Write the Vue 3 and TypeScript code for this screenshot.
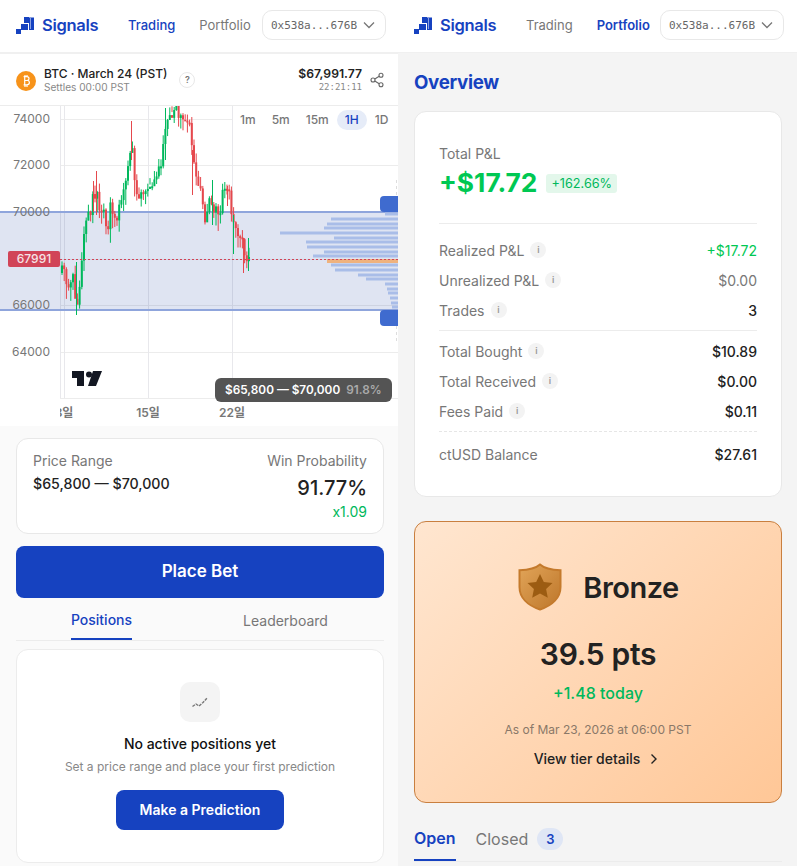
<script setup lang="ts">
// price path in chart pixels, candles get interpolated along it
const path: [number, number][] = [
  [61, 273], [67, 283], [72, 280], [76, 303], [80, 267], [83, 238], [90, 208], [95, 190],
  [100, 212], [107, 222], [110, 202], [115, 225], [120, 205], [125, 182], [131, 150], [135, 185],
  [140, 198], [147, 195], [152, 175], [158, 170], [162, 148], [165, 125], [172, 112], [180, 115],
  [188, 118], [192, 162], [195, 185], [200, 188], [203, 218], [210, 202], [217, 215], [222, 195],
  [228, 198], [233, 232], [240, 242], [245, 258], [249, 255],
]

function priceAt(x: number): number {
  for (let i = 1; i < path.length; i++) {
    const [x1, y1] = path[i]
    const [x0, y0] = path[i - 1]
    if (x <= x1) return y0 + ((y1 - y0) * (x - x0)) / (x1 - x0)
  }
  return path[path.length - 1][1]
}

function rand(seed: number): number {
  const n = Math.sin(seed * 12.9898) * 43758.5453
  return n - Math.floor(n)
}

const candles: { x: number; top: number; h: number; wickTop: number; wickH: number; up: boolean }[] = []
let prev = priceAt(61)
for (let x = 61; x < 250; x += 2.2) {
  const close = priceAt(x) + (rand(x) - 0.5) * 18
  const top = Math.min(prev, close)
  const bottom = Math.max(prev, close)
  candles.push({
    x,
    top,
    h: Math.max(bottom - top, 2),
    wickTop: top - 1 - rand(x + 7) * 8,
    wickH: bottom - top + 3 + rand(x + 13) * 16,
    up: close < prev,
  })
  prev = close
}

// the long wicks that stand out in the chart
const spikes = [
  { x: 76, top: 262, bottom: 315, up: true },
  { x: 93, top: 181, bottom: 212, up: false },
  { x: 96, top: 171, bottom: 215, up: false },
  { x: 131, top: 121, bottom: 160, up: false },
  { x: 165, top: 108, bottom: 160, up: true },
  { x: 192, top: 150, bottom: 195, up: false },
  { x: 212, top: 180, bottom: 225, up: true },
  { x: 227, top: 186, bottom: 206, up: false },
  { x: 233, top: 215, bottom: 254, up: true },
  { x: 243, top: 238, bottom: 273, up: false },
  { x: 248, top: 238, bottom: 271, up: true },
]

const gridY = [119, 165, 259, 305, 352, 398]
const gridX = [60, 64, 148, 232]
const axis = [
  { label: '74000', y: 123 },
  { label: '72000', y: 169 },
  { label: '70000', y: 216 },
  { label: '66000', y: 309 },
  { label: '64000', y: 356 },
]
const days = [
  { label: '8일', x: 64 },
  { label: '15일', x: 148 },
  { label: '22일', x: 232 },
]
const profile = [
  [214, 385], [219, 331], [224, 327], [228, 324], [233, 280], [238, 334], [242, 306], [247, 307],
  [252, 324], [256, 313], [265, 331], [270, 335], [275, 358], [279, 366], [284, 385], [289, 387],
  [293, 388], [298, 390], [303, 391], [307, 392],
]

const intervals = ['1m', '5m', '15m', '1H', '1D']

const pnlRows = [
  { label: 'Realized P&L', value: '+$17.72', tone: 'green' },
  { label: 'Unrealized P&L', value: '$0.00', tone: 'muted' },
  { label: 'Trades', value: '3', tone: '' },
]
const flowRows = [
  { label: 'Total Bought', value: '$10.89' },
  { label: 'Total Received', value: '$0.00' },
  { label: 'Fees Paid', value: '$0.11' },
]
</script>

<template>
  <div class="screens">
    <section class="panel panel--left">
      <header class="topbar">
        <div class="brand">
          <svg class="logo" viewBox="0 0 18 17" width="18" height="17">
            <path d="M8 0h10v13h-5V6H8z" fill="#1642c0" />
            <rect x="5" y="7" width="7" height="6" fill="#1642c0" />
            <rect x="0" y="12" width="5" height="5" fill="#1642c0" />
            <rect x="13" y="0" width="5" height="1" fill="#8aa0e0" />
            <rect x="14" y="1" width="1" height="11" fill="#8aa0e0" />
          </svg>
          <span class="brand-name">Signals</span>
        </div>
        <nav class="nav">
          <span class="nav-item nav-item--on">Trading</span>
          <span class="nav-item">Portfolio</span>
        </nav>
        <div class="wallet">
          <span>0x538a...676B</span>
          <svg viewBox="0 0 12 12" width="12" height="12"><path d="M1 3.500 6 8.500l5-5" fill="none" stroke="#777" stroke-width="1.3" /></svg>
        </div>
      </header>

      <div class="market">
        <svg class="coin" viewBox="0 0 20 20" width="20" height="20">
          <circle cx="10" cy="10" r="10" fill="#f7931a" />
          <path d="M7.600 5.600h3c1.500 0 2.400.8 2.400 2 0 .9-.5 1.500-1.200 1.800.9.2 1.600.9 1.600 2 0 1.500-1.100 2.400-2.800 2.400h-3M8.700 5.600v8.200M9 4v1.600M11 4v1.600M9 13.800V16M11 13.800V16M8.700 9.500h2.400" fill="none" stroke="#fff" stroke-width="1.200" />
        </svg>
        <div class="market-info">
          <div class="market-title">BTC · March 24 (PST)</div>
          <div class="market-sub">Settles 00:00 PST</div>
        </div>
        <span class="help">?</span>
        <div class="market-price">
          <div class="price">$67,991.77</div>
          <div class="clock">22:21:11</div>
        </div>
        <svg class="share" viewBox="0 0 14 16" width="14" height="16">
          <g fill="none" stroke="#666" stroke-width="1.100">
            <circle cx="11" cy="3.200" r="2" />
            <circle cx="3" cy="8" r="2" />
            <circle cx="11" cy="12.800" r="2" />
            <path d="M4.800 7 9.200 4.200M4.800 9l4.400 2.800" />
          </g>
        </svg>
      </div>

      <div class="chart">
        <svg class="chart-canvas" viewBox="0 106 398 320" width="398" height="320">
          <rect v-for="y in gridY" :key="'h' + y" x="60" :y="y" width="338" height="1" fill="#ececec" />
          <rect v-for="x in gridX" :key="'v' + x" :x="x" y="106" width="1" height="292" fill="#e8e8ec" />
          <rect x="0" y="212" width="398" height="98" fill="#1c3ea5" fill-opacity="0.14" />
          <rect x="0" y="211" width="398" height="2" fill="#8fa5dc" />
          <rect x="0" y="309" width="398" height="2" fill="#8fa5dc" />
          <line x1="396.500" y1="180" x2="396.500" y2="196" stroke="#ddd" stroke-dasharray="3 3" />
          <line x1="396.500" y1="326" x2="396.500" y2="342" stroke="#ddd" stroke-dasharray="3 3" />

          <rect v-for="p in profile" :key="p[0]" :x="p[1]" :y="p[0] - 1.500" :width="398 - p[1]" height="3" fill="#a9bde8" />
          <rect x="327" y="259" width="71" height="4" fill="#efb27e" />

          <g v-for="c in candles" :key="c.x" :fill="c.up ? '#00b85c' : '#e5484d'">
            <rect :x="c.x + 0.500" :y="c.wickTop" width="1" :height="c.wickH" />
            <rect :x="c.x" :y="c.top" width="2" :height="c.h" />
          </g>
          <rect v-for="s in spikes" :key="s.x" :x="s.x" :y="s.top" width="1" :height="s.bottom - s.top" :fill="s.up ? '#00b85c' : '#e5484d'" />

          <line x1="60" y1="259.500" x2="398" y2="259.500" stroke="#d14458" stroke-dasharray="2 2" />
          <text v-for="a in axis" :key="a.label" class="axis-text" x="50" :y="a.y" text-anchor="end">{{ a.label }}</text>
          <text v-for="d in days" :key="d.label" class="day-text" :x="d.x" y="417" text-anchor="middle">{{ d.label }}</text>
          <rect x="0" y="400" width="60" height="26" fill="#fff" />

          <path d="M72 371h12v15h-7v-8h-5z" fill="#131722" />
          <circle cx="89" cy="374.500" r="3" fill="#131722" />
          <path d="M93 371h9l-6 15h-8z" fill="#131722" />
        </svg>

        <div class="intervals">
          <span v-for="i in intervals" :key="i" class="interval" :class="{ 'interval--on': i === '1H' }">{{ i }}</span>
        </div>
        <span class="last-price">67991</span>
        <span class="handle handle--top" />
        <span class="handle handle--bottom" />
        <div class="range-tip">
          <span>$65,800 — $70,000</span>
          <span class="range-tip-pct">91.8%</span>
        </div>
      </div>

      <div class="trade">
        <div class="bet-card">
          <div>
            <div class="bet-label">Price Range</div>
            <div class="bet-range">$65,800 — $70,000</div>
          </div>
          <div class="bet-right">
            <div class="bet-label">Win Probability</div>
            <div class="bet-prob">91.77%</div>
            <div class="bet-mult">x1.09</div>
          </div>
        </div>
        <button class="place-bet">Place Bet</button>
        <div class="tabs">
          <div class="tab"><span class="tab-label tab-label--on">Positions</span></div>
          <div class="tab"><span class="tab-label">Leaderboard</span></div>
        </div>
        <div class="empty-card">
          <div class="empty-icon">
            <svg viewBox="0 0 16 16" width="16" height="16">
              <path d="M.5 12.500 4 10l3 2 4-3.500 4.500-5" fill="none" stroke="#777" stroke-width="1.400" stroke-dasharray="3 1" />
            </svg>
          </div>
          <div class="empty-title">No active positions yet</div>
          <div class="empty-sub">Set a price range and place your first prediction</div>
          <button class="predict">Make a Prediction</button>
        </div>
      </div>
    </section>

    <section class="panel panel--right">
      <header class="topbar topbar--right">
        <div class="brand">
          <svg class="logo" viewBox="0 0 18 17" width="18" height="17">
            <path d="M8 0h10v13h-5V6H8z" fill="#1642c0" />
            <rect x="5" y="7" width="7" height="6" fill="#1642c0" />
            <rect x="0" y="12" width="5" height="5" fill="#1642c0" />
            <rect x="13" y="0" width="5" height="1" fill="#8aa0e0" />
            <rect x="14" y="1" width="1" height="11" fill="#8aa0e0" />
          </svg>
          <span class="brand-name">Signals</span>
        </div>
        <nav class="nav">
          <span class="nav-item">Trading</span>
          <span class="nav-item nav-item--bold">Portfolio</span>
        </nav>
        <div class="wallet">
          <span>0x538a...676B</span>
          <svg viewBox="0 0 12 12" width="12" height="12"><path d="M1 3.500 6 8.500l5-5" fill="none" stroke="#777" stroke-width="1.300" /></svg>
        </div>
      </header>

      <div class="portfolio">
        <h1 class="overview">Overview</h1>
        <div class="pnl-card">
          <div class="pnl-label">Total P&amp;L</div>
          <div class="pnl-total">
            <span class="pnl-amount">+$17.72</span>
            <span class="pnl-badge">+162.66%</span>
          </div>
          <div class="rows rows--first">
            <div v-for="r in pnlRows" :key="r.label" class="row">
              <span class="row-label">{{ r.label }}<i class="info">i</i></span>
              <span class="row-value" :class="r.tone">{{ r.value }}</span>
            </div>
          </div>
          <div class="rows rows--second">
            <div v-for="r in flowRows" :key="r.label" class="row">
              <span class="row-label">{{ r.label }}<i class="info">i</i></span>
              <span class="row-value">{{ r.value }}</span>
            </div>
          </div>
          <div class="row row--balance">
            <span class="row-label">ctUSD Balance</span>
            <span class="row-value">$27.61</span>
          </div>
        </div>

        <div class="tier-card">
          <div class="tier-head">
            <svg viewBox="0 0 44 48" width="44" height="48">
              <defs>
                <linearGradient id="shieldFill" x1="0" y1="0" x2="1" y2="1">
                  <stop offset="0" stop-color="#e2a559" />
                  <stop offset="1" stop-color="#bd762a" />
                </linearGradient>
              </defs>
              <path d="M22 1.500c4 3.600 11 5.400 20.500 5.800V24c0 10.500-8 18.500-20.500 22.500C9.500 42.500 1.500 34.500 1.500 24V7.300C11 6.900 18 5.100 22 1.500z" fill="url(#shieldFill)" stroke="#c47a2c" stroke-width="2" />
              <path d="M22 11l3.800 8.100 8.700 1-6.400 6 1.700 8.700L22 30.500l-7.800 4.300 1.700-8.700-6.400-6 8.700-1z" fill="#9c5c12" />
            </svg>
            <span class="tier-name">Bronze</span>
          </div>
          <div class="tier-pts">39.5 pts</div>
          <div class="tier-today">+1.48 today</div>
          <div class="tier-asof">As of Mar 23, 2026 at 06:00 PST</div>
          <div class="tier-link">
            View tier details
            <svg viewBox="0 0 10 12" width="10" height="12"><path d="M2.500 1.500 7 6l-4.500 4.500" fill="none" stroke="#222" stroke-width="1.400" /></svg>
          </div>
        </div>

        <div class="trade-tabs">
          <span class="trade-tab trade-tab--on">Open</span>
          <span class="trade-tab">Closed<b class="count">3</b></span>
        </div>
      </div>
    </section>
  </div>
</template>

<style>
html, body { margin: 0; height: 866px; overflow: hidden; background: #f4f4f4; }
</style>

<style scoped>
* { box-sizing: border-box; }

.screens {
  display: grid;
  grid-template-columns: 398px 399px;
  height: 866px;
  overflow: hidden;
  font-family: Inter, "Noto Sans CJK KR", sans-serif;
  color: #222;
}
.panel { height: 866px; overflow: hidden; }
.panel--left { background: #fafafa; }
.panel--right { background: #f4f4f4; }

.topbar {
  display: flex;
  align-items: center;
  height: 54px;
  padding: 0 12px 2px 16px;
  background: #fff;
  border-bottom: 2px solid #f0f0f0;
}
.topbar--right { height: 53px; padding-bottom: 2px; padding-right: 13px; border-bottom-width: 1px; }
.brand { display: flex; align-items: center; gap: 8px; width: 112px; }
.logo { flex: none; }
.brand-name { font-size: 16.5px; font-weight: 600; color: #1642c0; letter-spacing: -0.3px; }
.nav { display: flex; gap: 24px; flex: 1; }
.nav-item { font-size: 13px; color: #777; }
.nav-item--on { color: #1642c0; font-weight: 500; }
.nav-item--bold { color: #1642c0; font-weight: 600; }
.wallet {
  display: flex;
  align-items: center;
  gap: 6px;
  width: 124px;
  height: 30px;
  padding: 0 8px;
  border: 1px solid #e8e8e8;
  border-radius: 10px;
  background: #fff;
  font-family: "DejaVu Sans Mono", monospace;
  font-size: 11px;
  color: #666;
}

.market {
  display: flex;
  align-items: center;
  height: 52px;
  padding: 1px 14px 0 16px;
  background: #fff;
  border-bottom: 1px solid #ececec;
}
.coin { flex: none; margin-top: 1px; }
.market-info { margin-left: 8px; }
.market-title { font-size: 12px; font-weight: 500; line-height: 15px; color: #222; }
.market-sub { font-size: 10.1px; line-height: 13px; color: #888; }
.help {
  width: 16px;
  height: 16px;
  margin-left: 12px;
  border: 1px solid #e8e8e8;
  border-radius: 50%;
  font-size: 9px;
  font-weight: 600;
  line-height: 14px;
  text-align: center;
  color: #777;
}
.market-price { margin-left: auto; text-align: right; }
.price { font-size: 12.2px; font-weight: 600; line-height: 15px; color: #222; }
.clock { font-family: "DejaVu Sans Mono", monospace; font-size: 9px; line-height: 13px; color: #888; }
.share { flex: none; margin-left: 8px; }

.chart { position: relative; height: 320px; background: #fff; overflow: hidden; }
.chart-canvas { display: block; }
.axis-text { font-size: 12px; fill: #777; }
.day-text { font-size: 12px; font-weight: 600; fill: #777; }
.intervals {
  position: absolute;
  top: 4px;
  left: 233px;
  right: 0;
  display: flex;
  align-items: center;
  height: 20px;
  padding-left: 7px;
  background: #fff;
}
.interval { font-size: 12px; font-weight: 500; color: #777; padding: 0 8px; line-height: 20px; }
.interval:first-child { padding-left: 0; }
.interval--on { background: #e6ecf8; color: #1642c0; border-radius: 10px; }
.last-price {
  position: absolute;
  left: 8px;
  top: 145px;
  width: 52px;
  height: 16px;
  background: #d14458;
  border-radius: 2px;
  font-size: 12px;
  font-weight: 500;
  line-height: 16px;
  text-align: center;
  color: #f6e3e6;
}
.handle { position: absolute; left: 380px; width: 18px; height: 16px; background: #3f6bcf; border-radius: 4px 0 0 4px; }
.handle--top { top: 90px; }
.handle--bottom { top: 204px; }
.range-tip {
  position: absolute;
  left: 215px;
  top: 272px;
  display: flex;
  align-items: center;
  gap: 6px;
  width: 177px;
  height: 24px;
  padding: 0 10px;
  background: #545454;
  border-radius: 6px;
  font-size: 11.8px;
  font-weight: 600;
  color: #fff;
  white-space: nowrap;
}
.range-tip-pct { color: #aaa; }

.trade { padding: 12px 14px 0 16px; }
.bet-card {
  display: flex;
  justify-content: space-between;
  height: 96px;
  padding: 13px 16px 0;
  background: #fff;
  border: 1px solid #e8e8e8;
  border-radius: 12px;
}
.bet-label { font-size: 14px; line-height: 18px; color: #777; }
.bet-range { margin-top: 5px; font-size: 14.2px; font-weight: 500; line-height: 18px; color: #222; }
.bet-right { text-align: right; }
.bet-prob { margin-top: 5px; font-size: 20px; font-weight: 500; line-height: 26px; color: #222; }
.bet-mult { margin-top: 2px; font-size: 14px; line-height: 18px; color: #00b85c; }
.place-bet {
  display: block;
  width: 100%;
  height: 52px;
  margin-top: 12px;
  padding: 0 0 2px;
  border: 0;
  border-radius: 8px;
  background: #1642c0;
  font: 600 17px Inter, sans-serif;
  color: #fff;
}
.tabs {
  display: grid;
  grid-template-columns: 184px 184px;
  height: 43px;
  border-bottom: 1px solid #ececec;
}
.tab { display: flex; justify-content: center; padding-right: 13px; }
.tab-label { height: 41px; padding-top: 13px; font-size: 14px; line-height: 20px; color: #777; }
.tab-label--on { height: 42px; padding-top: 12px; color: #1642c0; font-weight: 500; border-bottom: 2px solid #1642c0; }
.empty-card {
  display: flex;
  flex-direction: column;
  align-items: center;
  height: 214px;
  margin-top: 8px;
  padding-top: 32px;
  background: #fff;
  border: 1px solid #ececec;
  border-radius: 12px;
}
.empty-icon {
  display: flex;
  align-items: center;
  justify-content: center;
  width: 40px;
  height: 40px;
  border-radius: 10px;
  background: #f4f4f4;
}
.empty-title { margin-top: 12px; font-size: 14px; font-weight: 500; line-height: 20px; color: #111; }
.empty-sub { margin-top: 3px; font-size: 12px; line-height: 20px; color: #888; }
.predict {
  width: 168px;
  height: 40px;
  margin-top: 13px;
  padding: 0 0 2px;
  border: 0;
  border-radius: 8px;
  background: #1642c0;
  font: 600 14px Inter, sans-serif;
  color: #fff;
}

.portfolio { padding: 0 15px 0 16px; }
.overview {
  margin: 0;
  padding-top: 17px;
  font-size: 18.7px;
  font-weight: 700;
  line-height: 26px;
  color: #1642c0;
  letter-spacing: -0.3px;
}
.pnl-card {
  height: 386px;
  margin-top: 15px;
  padding: 33px 24px 0;
  background: #fff;
  border: 1px solid #e8e8e8;
  border-radius: 12px;
}
.pnl-label { font-size: 14px; line-height: 18px; color: #777; }
.pnl-total {
  display: flex;
  align-items: center;
  gap: 9px;
  margin-top: 5px;
  height: 56px;
  padding-bottom: 25px;
  border-bottom: 1px solid #ececec;
}
.pnl-amount { font-size: 26.3px; font-weight: 700; line-height: 30px; color: #00c853; }
.pnl-badge { padding: 0 5px; background: #e3f7eb; border-radius: 3px; font-size: 12.7px; line-height: 19px; color: #00b85c; }
.rows { padding: 5px 0; }
.rows--first { padding-top: 11px; border-bottom: 1px solid #ececec; }
.rows--second { border-bottom: 1px dashed #e6e6e6; }
.row { display: flex; align-items: center; justify-content: space-between; height: 30px; font-size: 14px; }
.row--balance { margin-top: 7px; }
.row-label { display: flex; align-items: center; gap: 6px; color: #777; }
.row-value { color: #222; font-weight: 500; }
.row-value.green { color: #00c853; font-weight: 400; }
.row-value.muted { color: #777; font-weight: 400; }
.info {
  width: 16px;
  height: 16px;
  border-radius: 50%;
  background: #f3f3f3;
  font-size: 9px;
  font-style: normal;
  font-weight: 600;
  line-height: 16px;
  text-align: center;
  color: #999;
}

.tier-card {
  display: flex;
  flex-direction: column;
  align-items: center;
  height: 282px;
  margin-top: 24px;
  padding-top: 40px;
  background: linear-gradient(135deg, #ffe6d0 0%, #ffc797 100%);
  border: 1px solid #c97f3f;
  border-radius: 12px;
}
.tier-head { display: flex; align-items: center; gap: 21px; height: 50px; margin-left: 1px; }
.tier-name { font-size: 29px; font-weight: 600; letter-spacing: -0.5px; color: #222; }
.tier-pts { margin-top: 20px; font-size: 30px; font-weight: 600; line-height: 44px; color: #222; letter-spacing: -0.3px; }
.tier-today { margin-top: 5px; font-size: 16px; font-weight: 500; line-height: 24px; color: #00b85c; }
.tier-asof { margin-top: 15px; font-size: 12px; line-height: 20px; color: #8a7868; }
.tier-link { display: flex; align-items: center; gap: 9px; margin: 9px 3px 0 0; font-size: 14px; font-weight: 500; line-height: 20px; color: #222; }

.trade-tabs {
  display: flex;
  align-items: flex-start;
  gap: 20px;
  height: 38px;
  margin-top: 21px;
  border-bottom: 1px solid #ececec;
}
.trade-tab { display: flex; align-items: center; gap: 9px; height: 37px; padding-bottom: 7px; font-size: 16px; line-height: 22px; color: #777; }
.trade-tab--on { padding-bottom: 7px; color: #1642c0; font-weight: 600; border-bottom: 2px solid #1642c0; }
.count {
  width: 26px;
  height: 22px;
  background: #dfe6f5;
  border-radius: 11px;
  font-size: 13px;
  font-weight: 600;
  line-height: 22px;
  text-align: center;
  color: #1642c0;
}
</style>
